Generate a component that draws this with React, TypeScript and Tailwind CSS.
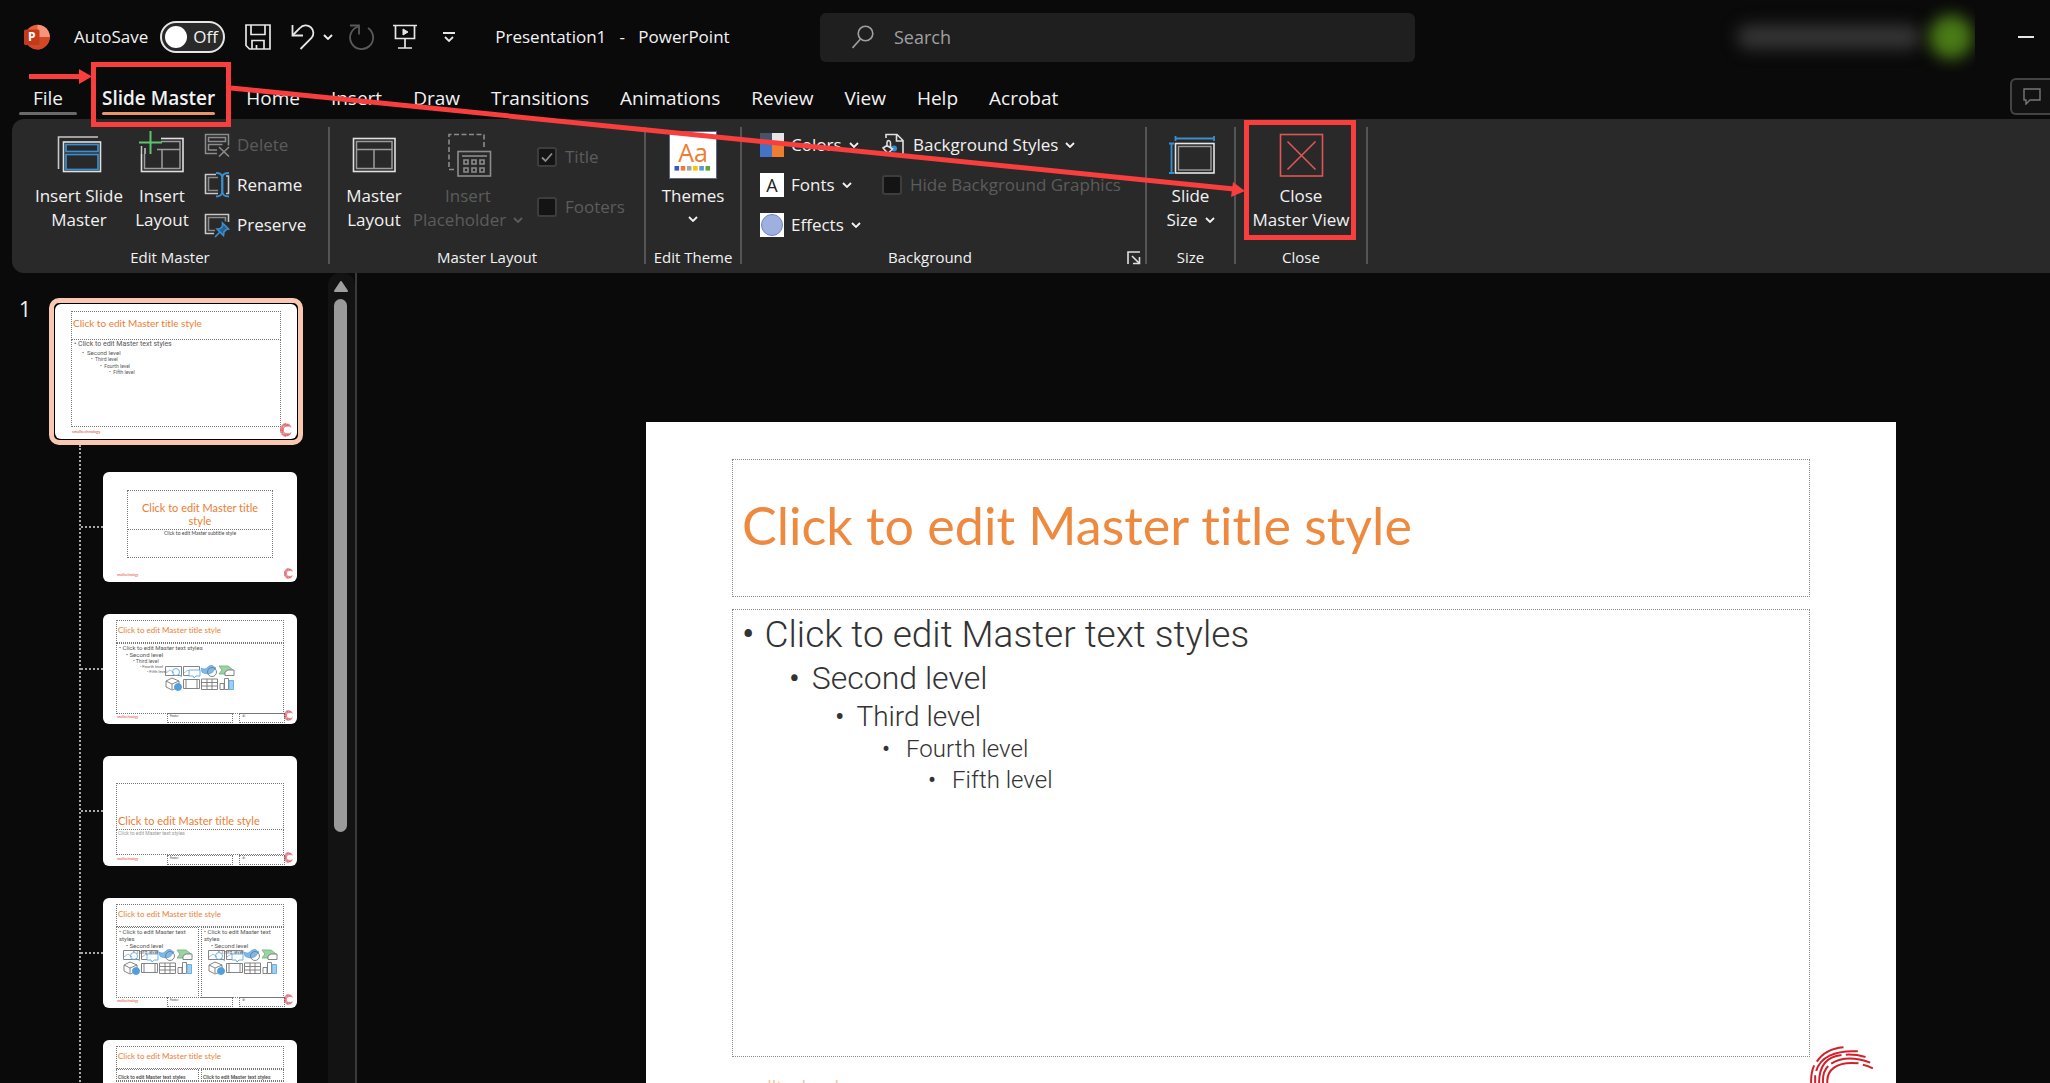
import React from 'react';

const tabs = ['Home', 'Insert', 'Draw', 'Transitions', 'Animations', 'Review', 'View', 'Help', 'Acrobat'];

const levels = [
  { text: 'Click to edit Master text styles', row: 'pl-[9px] gap-[10px] text-[37px] leading-[46px]' },
  { text: 'Second level', row: 'pl-[56px] gap-3 text-[32px] leading-[41px]' },
  { text: 'Third level', row: 'pl-[102px] gap-3 text-[28px] leading-[35px]' },
  { text: 'Fourth level', row: 'pl-[149px] gap-4 text-[24px] leading-[31px]' },
  { text: 'Fifth level', row: 'pl-[195px] gap-4 text-[24px] leading-[31px]' },
];

/* ---------- icons ---------- */

const Chevron = ({ className = '' }: { className?: string }) => (
  <svg viewBox="0 0 10 6" className={`inline-block h-[6px] w-[10px] ${className}`} fill="none" stroke="currentColor" strokeWidth="1.8">
    <path d="M1 1l4 4 4-4" />
  </svg>
);

const PowerPointLogo = () => (
  <svg viewBox="0 0 26 26" className="h-[26px] w-[26px]">
    <circle cx="13.5" cy="13" r="12.3" fill="#e8603c" />
    <path d="M13.5 .7A12.3 12.3 0 0 1 25.8 13H13.5z" fill="#f9937a" />
    <path d="M2.2 18a12.3 12.3 0 0 0 23.6-5H13.5z" fill="#d24726" />
    <rect x="0" y="5.5" width="15.5" height="15.5" rx="1.5" fill="#c13b1b" />
    <text x="7.8" y="17.4" textAnchor="middle" fontSize="12" fontWeight="700" fill="#fff" fontFamily="Open Sans, sans-serif">P</text>
  </svg>
);

const SaveIcon = () => (
  <svg viewBox="0 0 26 26" className="h-[26px] w-[26px]" fill="none" stroke="#e6e6e6" strokeWidth="1.7">
    <path d="M1 1h24v24H4.5L1 21.5z" />
    <path d="M6 1v9.5h14V1M7 25v-8.5h12V25M11.5 21v4" />
  </svg>
);

const UndoIcon = () => (
  <svg viewBox="0 0 24 26" className="h-[26px] w-[24px]" fill="none" stroke="#e6e6e6" strokeWidth="1.8">
    <path d="M1.5 1v10.5H12" />
    <path d="M1.5 11.5L9 4a7.6 7.6 0 0 1 11.5 10L9.500 25" />
  </svg>
);

const RedoIcon = () => (
  <svg viewBox="0 0 26 26" className="h-[26px] w-[26px]" fill="none" stroke="#5a5a5a" strokeWidth="1.8">
    <path d="M1 1.500h9v9" />
    <path d="M9.500 2.500A11.500 11.500 0 1 0 19 4" />
  </svg>
);

const SlideShowIcon = () => (
  <svg viewBox="0 0 24 26" className="h-[26px] w-[24px]" fill="none" stroke="#e6e6e6" strokeWidth="1.7">
    <path d="M0 1.500h24M2.500 1.500v13h19v-13M12 14.500V24M5 24h14" />
    <path d="M10 5l5 3-5 3z" fill="#e6e6e6" strokeWidth="1" />
  </svg>
);

const SlideMasterIcon = () => (
  <svg viewBox="0 0 48 48" className="h-12 w-12" fill="none">
    <path d="M3.500 38V6H43" stroke="#c8c8c8" strokeWidth="1.6" />
    <rect x="8.500" y="11" width="37" height="29.500" stroke="#e0e0e0" strokeWidth="1.600" />
    <rect x="11" y="13.500" width="32" height="7" stroke="#3a8fd0" strokeWidth="1.700" />
    <rect x="11" y="23.500" width="32" height="15" stroke="#3a8fd0" strokeWidth="1.700" />
  </svg>
);

const LayoutIcon = ({ plus = false }: { plus?: boolean }) => (
  <svg viewBox="0 0 48 48" className="h-12 w-12" fill="none">
    <rect x="3.500" y="7.500" width="41.500" height="33" stroke="#e0e0e0" strokeWidth="1.600" />
    <path d="M6.500 10.500h35.500v27h-35.500zM6.500 18.500H42M24 18.500v19" stroke="#9c9c9c" strokeWidth="1.500" />
    {plus && (
      <>
        <path d="M0 0h23v14.500h-4V23H0z" fill="#292929" />
        <path d="M3.500 15v8M7 17v6" stroke="#c8c8c8" strokeWidth="1.500" />
        <path d="M12.500 0v23M1 11.500h23" stroke="#5fc46e" strokeWidth="2" />
      </>
    )}
  </svg>
);

const PlaceholderIcon = () => (
  <svg viewBox="0 0 48 48" className="h-12 w-12" fill="none" stroke="#8c8c8c" strokeWidth="1.600">
    <path d="M10 38.500H5V3.500h35V17" strokeDasharray="5 2.500" />
    <rect x="14" y="20.500" width="32.500" height="24.500" />
    <path d="M18 25h25" />
    <path d="M20 29h4v4h-4zM28 29h4v4h-4zM36 29h4v4h-4zM20 37h4v4h-4zM28 37h4v4h-4zM36 37h4v4h-4z" />
  </svg>
);

const SlideSizeIcon = () => (
  <svg viewBox="0 0 48 48" className="h-12 w-12" fill="none">
    <path d="M8.500 5v5M8.500 7.500h38.500M47 5v5M2 12.500h5M4.500 12.500V42M2 42h5" stroke="#3a8fd0" strokeWidth="1.800" />
    <rect x="8.500" y="12.500" width="38.500" height="29.500" stroke="#e6e6e6" strokeWidth="1.600" />
    <rect x="11.500" y="15.500" width="32.500" height="23.500" stroke="#9c9c9c" strokeWidth="1.400" />
  </svg>
);

const CloseIcon = () => (
  <svg viewBox="0 0 48 48" className="h-12 w-12" fill="none" stroke="#e05555" strokeWidth="1.600">
    <rect x="3.500" y="3.500" width="42" height="41.500" />
    <path d="M10.500 10.500l28 28M38.500 10.500l-28 28" />
  </svg>
);

const ThemesIcon = () => (
  <svg viewBox="0 0 48 48" className="h-12 w-12">
    <rect x=".5" y=".5" width="47" height="47" fill="#fff" stroke="#5d6b8a" />
    <text x="24" y="31" textAnchor="middle" fontSize="25" fill="#ed7d31" fontFamily="Open Sans, sans-serif">Aa</text>
    {['#2f5cc4', '#ed7d31', '#a5a5a5', '#ffc000', '#5b9bd5', '#5fa63a'].map((c, i) => (
      <rect key={c} x={5.500 + i * 6.200} y="35" width="4.600" height="4.600" fill={c} />
    ))}
  </svg>
);

const DeleteIcon = () => (
  <svg viewBox="0 0 26 24" className="h-6 w-[26px]" fill="none" stroke="#8c8c8c" strokeWidth="1.500">
    <path d="M13 20.500H1.500v-19h23v11" />
    <path d="M4.500 4.500h17v4h-17zM13 17H4.500v-5.500h14M15 14l10 9.500M25 14l-10 9.500" />
  </svg>
);

const RenameIcon = () => (
  <svg viewBox="0 0 26 26" className="h-[26px] w-[26px]" fill="none" strokeWidth="1.600">
    <path d="M12 2.500H1.500v19H14M22 4h2.500v17.500H22" stroke="#c8c8c8" />
    <path d="M14 5.500H4.500v13H14" stroke="#8c8c8c" />
    <path d="M12 1c4 0 6 1 6 4v15c0 3-2 4.500-6 4.500M25 1c-4 0-6.500 1-6.500 4v15c0 3 2 4.500 6.500 4.500" stroke="#3a8fd0" strokeWidth="1.800" />
  </svg>
);

const PreserveIcon = () => (
  <svg viewBox="0 0 26 26" className="h-[26px] w-[26px]" fill="none" strokeWidth="1.600">
    <path d="M10 21.500H1.500v-19h23V10" stroke="#c8c8c8" />
    <path d="M11 18.500H4.500v-13h17v4" stroke="#8c8c8c" />
    <path d="M18.500 11l6 6-2 .5-2.500 2.500-.5 3.500-6.500-6.500 3.500-.5 2-2.500zM15.500 20.500L11 25" fill="#2c5f87" stroke="#3a8fd0" />
  </svg>
);

const ColorsIcon = () => (
  <svg viewBox="0 0 24 24" className="h-6 w-6">
    <path d="M0 0h12v12H0z" fill="#44546a" />
    <path d="M12 0h12v12H12z" fill="#e7e6e6" />
    <path d="M0 10h12v14H0z" fill="#4472c4" />
    <path d="M12 10h12v14H12z" fill="#ed7d31" />
  </svg>
);

const FontsIcon = () => (
  <svg viewBox="0 0 24 24" className="h-6 w-6">
    <rect width="24" height="24" fill="#fff" />
    <text x="12" y="18.500" textAnchor="middle" fontSize="18" fill="#222" fontFamily="Open Sans, sans-serif">A</text>
  </svg>
);

const EffectsIcon = () => (
  <svg viewBox="0 0 24 24" className="h-6 w-6">
    <rect width="24" height="24" fill="#fff" />
    <circle cx="12" cy="12" r="10.500" fill="#9db0de" stroke="#6d86c8" />
  </svg>
);

const BackgroundIcon = () => (
  <svg viewBox="0 0 24 24" className="h-6 w-6" fill="none" stroke="#e0e0e0" strokeWidth="1.600">
    <path d="M4 5V1.500h11l6 6V23h-9M14.500 1.500V8H21" />
    <circle cx="12" cy="15.500" r="3" fill="#2f8fe0" stroke="none" />
    <path d="M5 8.500V14M5 8.500c2-2 3.500 0 3.500 1.500v5M1 15l4-2.500 5.500 3.500L6 20.500z" fill="#292929" />
  </svg>
);

/* Brand mark: five broken arcs forming a C */
const arcs = (
  <g>
    <path d="M331 249C330 228 332 208 340 191M348 180C364 156 390 140 428 137" />
    <path d="M343 249V221M346 208C358 168 400 145 471 149" />
    <path d="M355 249C353 196 376 165 422 160M435 159C456 158 476 161 494 166" />
    <path d="M367 249C364 222 371 204 382 193M391 186C420 168 462 166 508 183" />
    <path d="M380 249C374 205 407 178 473 185M486 189C497 191 507 195 516 200" />
  </g>
);

const BrandMark = ({ className = '' }: { className?: string }) => (
  <svg viewBox="325 130 200 240" className={className} fill="none" stroke="#d0202a" strokeWidth="6">
    {arcs}
    <g transform="matrix(1 0 0 -1 0 498)">{arcs}</g>
  </svg>
);

/* The eight "insert content" glyphs in a content placeholder */
const ContentIcons = ({ className = '' }: { className?: string }) => (
  <svg viewBox="0 0 70 26" className={`absolute h-[26px] w-[70px] ${className}`} fill="none" stroke="#777" strokeWidth=".9">
    <path d="M.5 1.500h16v9H.5zM18.500 1.500h16v9h-16z" />
    <path d="M1 8l4-3 4 3M19 8l4-3 4 3" stroke="#8ab8de" />
    <circle cx="11" cy="7" r="3.500" stroke="#5ea9e2" />
    <path d="M13.500 9.500L17 12" stroke="#5ea9e2" />
    <path d="M24 5h11v6h-4l-2 2-1-2h-4z" stroke="#5ea9e2" fill="#fff" />
    <path d="M36 3c3 2 5 1 7-1s5-2 6 0l2 1-2 2c-1 4-8 5-12 2z" fill="#7fb9e8" stroke="#5ea9e2" />
    <circle cx="47" cy="7" r="4.500" />
    <path d="M54 1h9l5 4-5 4h-9l3-4z" fill="#9bd3a3" stroke="#6fb97b" />
    <path d="M60 10.500V7l3-2h6v5.500z" fill="#fff" />
    <path d="M1 16l6-3 7 3v6l-7 3-6-3zM1 16l6 3 7-3M7 19v5" />
    <circle cx="13" cy="22" r="3.500" fill="#4f9fe0" stroke="#4f9fe0" />
    <path d="M18.500 14.500h16v9h-16zM21 14.500v9M32 14.500v9" />
    <path d="M36.500 14h16v10.500h-16zM36.500 17.500h16M36.500 21h16M42 14v10.500M47 14v10.500" />
    <path d="M55 18.500h4v6h-4zM59.500 13.500h4v11h-4z" />
    <path d="M64 15.500h4.500v9H64z" fill="#9fd0f2" stroke="#5ea9e2" />
  </svg>
);

/* ---------- ribbon parts ---------- */

const Separator = () => <div className="mt-[2px] mb-[9px] w-[2px] self-stretch bg-[#555]" />;

const Group = ({ label, width, launcher, children }: { label: string; width: string; launcher?: boolean; children: React.ReactNode }) => (
  <section className={`flex flex-col justify-between pb-2 ${width}`}>
    <div className="flex items-start">{children}</div>
    <div className="flex items-center text-[15px] leading-[15px]">
      <span className="flex-1 text-center">{label}</span>
      {launcher && (
        <button aria-label="Format Background" className="w-[27px] pl-[9px]">
          <svg viewBox="0 0 14 14" className="h-[14px] w-[14px]" fill="none" stroke="#e0e0e0" strokeWidth="1.600">
            <path d="M1 13V1h12M5 5l7 7M12.500 6v6.500H6" />
          </svg>
        </button>
      )}
    </div>
  </section>
);

const BigButton = ({ icon, lines, width, arrow, disabled }: { icon: React.ReactNode; lines: string[]; width: string; arrow?: boolean; disabled?: boolean }) => (
  <button disabled={disabled} className={`flex flex-col items-center pt-[6px] disabled:text-[#5c5c5c] ${width}`}>
    {icon}
    <span className="mt-[5px] flex flex-col items-center whitespace-nowrap text-[17px] leading-6">
      {lines.map((line, i) => (
        <span key={line} className="h-6">
          {line}
          {arrow && i === lines.length - 1 && lines.length > 1 && <Chevron className="mb-[3px] ml-[7px]" />}
        </span>
      ))}
      {arrow && lines.length === 1 && <Chevron className="mt-2" />}
    </span>
  </button>
);

const SmallButton = ({ icon, label, arrow, disabled }: { icon: React.ReactNode; label: string; arrow?: boolean; disabled?: boolean }) => (
  <button disabled={disabled} className="flex h-10 items-center gap-[7px] whitespace-nowrap text-[17px] disabled:text-[#5c5c5c]">
    {icon}
    {label}
    {arrow && <Chevron />}
  </button>
);

const CheckRow = ({ id, label, checked, height }: { id: string; label: string; checked?: boolean; height: string }) => (
  <div className={`flex items-center gap-2 text-[17px] text-[#5c5c5c] ${height}`}>
    <span className="relative flex">
      <input id={id} type="checkbox" disabled defaultChecked={checked} className="h-5 w-5 appearance-none rounded-[3px] border-2 border-[#3d3d3d] bg-[#141414]" />
      {checked && (
        <svg viewBox="0 0 20 20" className="pointer-events-none absolute inset-0 h-5 w-5" fill="none" stroke="#8c8c8c" strokeWidth="1.800">
          <path d="M5 10.500l3.500 3.500L15 6.500" />
        </svg>
      )}
    </span>
    <label htmlFor={id} className="whitespace-nowrap">{label}</label>
  </div>
);

const Ribbon = () => (
  <div className="ml-3 flex h-[154px] rounded-l-xl bg-[#292929] pt-[6px]">
    <Group label="Edit Master" width="w-[316px] [&>div:first-child]:pl-[17px]">
      <BigButton icon={<SlideMasterIcon />} lines={['Insert Slide', 'Master']} width="w-[100px]" />
      <BigButton icon={<LayoutIcon plus />} lines={['Insert', 'Layout']} width="w-[66px]" />
      <div className="ml-[9px]">
        <SmallButton icon={<DeleteIcon />} label="Delete" disabled />
        <SmallButton icon={<RenameIcon />} label="Rename" />
        <SmallButton icon={<PreserveIcon />} label="Preserve" />
      </div>
    </Group>
    <Separator />
    <Group label="Master Layout" width="w-[314px] [&>div:first-child]:pl-[9px]">
      <BigButton icon={<LayoutIcon />} lines={['Master', 'Layout']} width="w-[70px]" />
      <BigButton icon={<PlaceholderIcon />} lines={['Insert', 'Placeholder']} width="w-[118px]" arrow disabled />
      <div className="ml-[10px] pt-[7px]">
        <CheckRow id="title" label="Title" checked height="h-[50px]" />
        <CheckRow id="footers" label="Footers" height="h-[50px]" />
      </div>
    </Group>
    <Separator />
    <Group label="Edit Theme" width="w-[94px]">
      <BigButton icon={<ThemesIcon />} lines={['Themes']} width="w-full" arrow />
    </Group>
    <Separator />
    <Group label="Background" width="w-[403px] [&>div:first-child]:pl-[18px]" launcher>
      <div className="w-[122px]">
        <SmallButton icon={<ColorsIcon />} label="Colors" arrow />
        <SmallButton icon={<FontsIcon />} label="Fonts" arrow />
        <SmallButton icon={<EffectsIcon />} label="Effects" arrow />
      </div>
      <div>
        <SmallButton icon={<BackgroundIcon />} label="Background Styles" arrow />
        <CheckRow id="hide" label="Hide Background Graphics" height="h-10" />
      </div>
    </Group>
    <Separator />
    <Group label="Size" width="w-[87px]">
      <BigButton icon={<SlideSizeIcon />} lines={['Slide', 'Size']} width="w-full" arrow />
    </Group>
    <Separator />
    <Group label="Close" width="w-[130px]">
      <BigButton icon={<CloseIcon />} lines={['Close', 'Master View']} width="w-full" />
    </Group>
    <Separator />
  </div>
);

const TitleBar = () => (
  <header className="flex h-[74px] items-center text-[17px]">
    <div className="flex w-[40%] items-center pl-6">
      <PowerPointLogo />
      <span id="autosave" className="ml-6">AutoSave</span>
      <button role="switch" aria-checked="false" aria-labelledby="autosave" className="ml-3 flex h-8 w-[65px] items-center gap-[6px] rounded-full border-2 border-[#e6e6e6] bg-[#292929] pl-[3px]">
        <span className="h-[22px] w-[22px] rounded-full bg-white" />
        Off
      </button>
      <button aria-label="Save" className="ml-5"><SaveIcon /></button>
      <button aria-label="Undo" className="ml-5"><UndoIcon /></button>
      <button aria-label="Undo history" className="ml-2 flex"><Chevron /></button>
      <button aria-label="Redo" className="ml-4"><RedoIcon /></button>
      <button aria-label="Start slide show" className="ml-[18px]"><SlideShowIcon /></button>
      <button aria-label="Customize toolbar" className="ml-[26px]">
        <svg viewBox="0 0 12 12" className="h-3 w-3" fill="none" stroke="#e6e6e6" strokeWidth="1.800">
          <path d="M0 2h12M2 6l4 4 4-4" />
        </svg>
      </button>
      <h1 className="ml-10 whitespace-pre">Presentation1   -   PowerPoint</h1>
    </div>
    <label className="flex h-[49px] w-[29%] items-center gap-5 rounded-md bg-[#1f1f1f] pl-8">
      <svg viewBox="0 0 22 24" className="h-6 w-[22px]" fill="none" stroke="#a0a0a0" strokeWidth="1.600">
        <circle cx="13.500" cy="8.500" r="7.300" />
        <path d="M8.500 14L.5 23" />
      </svg>
      <input type="text" aria-label="Search" placeholder="Search" className="flex-1 bg-transparent text-[18px] outline-none placeholder:text-[#a0a0a0]" />
    </label>
    <div className="flex flex-1 items-center justify-end pr-4">
      <div className="flex h-[74px] items-center overflow-hidden pl-5">
        <div className="h-6 w-[184px] rounded-full bg-[#353535] blur-[8px]" />
        <div className="mr-[2px] ml-2 h-11 w-11 rounded-full bg-[#4a7a16] blur-[8px]" />
      </div>
      <button aria-label="Minimize" className="ml-[43px] h-[2px] w-4 bg-[#e6e6e6]" />
    </div>
  </header>
);

const TabRow = () => (
  <nav className="flex h-[45px] items-start justify-between text-[19px]">
    <div className="flex gap-[31px] pt-[10px] pl-[19px] leading-7">
      <button className="-mr-[6px] flex flex-col items-center">
        File
        <span className="h-[3px] w-[58px] rounded-full bg-[#6a6a6a]" />
      </button>
      <button className="flex flex-col font-semibold">
        Slide Master
        <span className="h-[3px] w-full rounded-full bg-[#e8956b]" />
      </button>
      {tabs.map((tab) => (
        <button key={tab} className="h-7">{tab}</button>
      ))}
    </div>
    <button aria-label="Comments" className="mt-1 flex h-[37px] w-10 items-center rounded-l-md border-2 border-r-0 border-[#444] bg-[#121212] pl-[11px]">
      <svg viewBox="0 0 18 17" className="h-[17px] w-[18px]" fill="none" stroke="#777" strokeWidth="1.400">
        <path d="M1 1h16v11H7l-4 4v-4H1z" />
      </svg>
    </button>
  </nav>
);

/* ---------- thumbnails ---------- */

const Box = ({ className = '', children }: { className?: string; children?: React.ReactNode }) => (
  <div className={`border border-dotted border-[#777] ${className}`}>{children}</div>
);

const ThumbBody = ({ items }: { items: string[] }) => (
  <ul className="font-[Roboto,sans-serif] text-[#555]">
    {items.map((t, i) => (
      <li key={t} className={['pl-[2px] text-[6px] leading-[7px]', 'pl-[9px] text-[6px] leading-[7px]', 'pl-4 text-[5px] leading-[6px]', 'pl-[23px] text-[4px] leading-[5px]', 'pl-[30px] text-[4px] leading-[5px]'][i]}>
        • {t}
      </li>
    ))}
  </ul>
);

const ThumbFooter = ({ fields = true }: { fields?: boolean }) => (
  <>
    <span className="absolute bottom-[5px] left-[14px] text-[3px] leading-[4px] text-[#e0452f]">smalltechnology</span>
    {fields && (
      <>
        <Box className="absolute bottom-[1px] left-16 h-[10px] w-[66px] pl-[2px] text-[3px] leading-[5px]">Footer</Box>
        <Box className="absolute bottom-[1px] left-[136px] h-[10px] w-[46px] pl-[2px] text-[3px] leading-[5px]">‹#›</Box>
      </>
    )}
    <BrandMark className="absolute right-1 bottom-[3px] h-[11px] w-[9px] [stroke-width:10]" />
  </>
);

const ThumbTitle = () => <Box className="flex h-[23px] items-center pb-[3px] pl-[1px] text-[8px] text-[#ed7d31]">Click to edit Master title style</Box>;

const LayoutThumb = ({ label, className = '', children }: { label: string; className?: string; children: React.ReactNode }) => (
  <li className="flex items-center">
    <span className="w-[22px] shrink-0 border-t-2 border-dotted border-[#aaa]" />
    <button aria-label={label} className={`relative flex h-[110px] w-[194px] flex-col items-stretch overflow-hidden rounded-md bg-white text-left font-[Lato,sans-serif] text-[#444] ${className}`}>
      {children}
    </button>
  </li>
);

const SlidePane = () => (
  <aside className="flex shrink-0 overflow-hidden border-r-2 border-[#3a3a3a] [font-variant-ligatures:none]">
    <div className="w-[328px] pt-[25px]">
      <div className="flex">
        <span className="w-[49px] pl-[19px] text-[21px] leading-[22px]">1</span>
        <button aria-label="Slide master" className="h-[147px] w-[254px] rounded-[10px] border-[5px] border-[#f8c9b0] bg-black p-[1px] text-left font-[Lato,sans-serif]">
          <div className="relative h-full rounded-md bg-white px-4 pt-[7px]">
            <Box className="flex h-[29px] items-center pb-1 pl-[1px] text-[10px] text-[#ed7d31]">Click to edit Master title style</Box>
            <Box className="-mt-[1px] h-[88px]">
              <ul className="font-[Roboto,sans-serif] text-[#555]">
                <li className="pl-[2px] text-[7px] leading-[9px]">• Click to edit Master text styles</li>
                <li className="pl-[10px] text-[6px] leading-[7px]">•&nbsp; Second level</li>
                <li className="pl-[19px] text-[5px] leading-[7px]">•&nbsp; Third level</li>
                <li className="pl-7 text-[5px] leading-[6px]">•&nbsp; Fourth level</li>
                <li className="pl-[37px] text-[5px] leading-[6px]">•&nbsp; Fifth level</li>
              </ul>
            </Box>
            <span className="absolute bottom-[5px] left-[17px] text-[4px] leading-[5px] text-[#e0452f]">smalltechnology</span>
            <BrandMark className="absolute right-[5px] bottom-[2px] h-[14px] w-3 [stroke-width:10]" />
          </div>
        </button>
      </div>
      <ul className="ml-[79px] flex flex-col gap-8 border-l-2 border-dotted border-[#aaa] pt-[27px]">
        <LayoutThumb label="Title slide layout" className="px-6 pt-[18px]">
          <Box className="h-10 px-3 pt-[10px] text-center text-[11px] leading-[13px] text-[#ed7d31]">Click to edit Master title style</Box>
          <Box className="-mt-[1px] h-[29px] text-center text-[5px] leading-[7px]">Click to edit Master subtitle style</Box>
          <ThumbFooter fields={false} />
        </LayoutThumb>
        <LayoutThumb label="Title and content layout" className="px-[13px] pt-[6px]">
          <ThumbTitle />
          <Box className="relative h-[71px]">
            <ThumbBody items={['Click to edit Master text styles', 'Second level', 'Third level', 'Fourth level', 'Fifth level']} />
            <ContentIcons className="top-[21px] left-12" />
          </Box>
          <ThumbFooter />
        </LayoutThumb>
        <LayoutThumb label="Section header layout" className="px-[13px] pt-[27px]">
          <Box className="flex h-[47px] items-end pb-[2px] pl-[1px] text-[11px] leading-[13px] text-[#ed7d31]">Click to edit Master title style</Box>
          <Box className="-mt-[1px] h-[26px] pl-[1px] font-[Roboto,sans-serif] text-[5px] leading-[7px] text-[#999]">Click to edit Master text styles</Box>
          <ThumbFooter />
        </LayoutThumb>
        <LayoutThumb label="Two content layout" className="px-[13px] pt-[6px]">
          <ThumbTitle />
          <div className="flex gap-[2px]">
            {['left', 'right'].map((side) => (
              <Box key={side} className="relative h-[71px] flex-1">
                <ThumbBody items={['Click to edit Master text styles', 'Second level', 'Third level']} />
                <ContentIcons className="top-[21px] left-[6px]" />
              </Box>
            ))}
          </div>
          <ThumbFooter />
        </LayoutThumb>
        <LayoutThumb label="Comparison layout" className="px-[13px] pt-[6px]">
          <ThumbTitle />
          <div className="flex gap-[2px]">
            {['left', 'right'].map((side) => (
              <div key={side} className="flex-1 font-[Roboto,sans-serif] text-[5px] leading-[5px] font-medium">
                <Box className="h-3 pt-[5px] pl-[1px]">Click to edit Master text styles</Box>
                <Box className="h-[59px]" />
              </div>
            ))}
          </div>
        </LayoutThumb>
      </ul>
    </div>
    <div className="flex w-[27px] flex-col items-start rounded-t-xl bg-[#131313] pt-2 pl-[6px]">
      <svg viewBox="0 0 14 11" className="h-[11px] w-[14px]"><path d="M7 1l6 9H1z" fill="#a0a0a0" stroke="#a0a0a0" strokeLinejoin="round" strokeWidth="2" /></svg>
      <div className="mt-[7px] h-[533px] w-[13px] rounded-full bg-[#9a9a9a]" />
    </div>
  </aside>
);

const SlideCanvas = () => (
  <main className="min-w-0 flex-1 overflow-hidden pt-[149px] pr-[154px] pl-[289px] [font-variant-ligatures:none]">
    <div className="relative aspect-video bg-white px-[86px] pt-[37px]">
      <div className="flex h-[138px] items-center border border-dotted border-[#8a8a8a] pb-[6px] pl-[9px]">
        <h2 className="font-[Lato,sans-serif] text-[52px] whitespace-nowrap text-[#ed8a3f]">Click to edit Master title style</h2>
      </div>
      <div className="mt-3 h-[448px] border border-dotted border-[#8a8a8a] pt-[2px]">
        <ul className="font-[Roboto,sans-serif] font-light text-[#333]">
          {levels.map((l) => (
            <li key={l.text} className={`flex ${l.row}`}>
              <span className="font-normal">•</span>
              {l.text}
            </li>
          ))}
        </ul>
      </div>
      <p className="mt-[18px] text-[18px] leading-6 text-[#f6c4a0]">smalltechnology</p>
      <BrandMark className="absolute right-5 bottom-0 h-20 w-[67px]" />
    </div>
  </main>
);

/* Red call-outs pointing from the tab to the close button */
const Callouts = () => (
  <svg className="pointer-events-none absolute top-0 left-0 h-[260px] w-[1400px]" viewBox="0 0 1400 260" fill="none" stroke="#f93e3e" strokeWidth="5">
    <rect x="93.500" y="64.500" width="135" height="60" />
    <rect x="1246.500" y="122.500" width="107" height="115" />
    <path d="M29 76.500h52M231 88l1003 101" />
    <path d="M79 69v15l13-7.500zM1233 182l-2 15 14-6z" fill="#f93e3e" stroke="none" />
  </svg>
);

const App: React.FC = () => {
  return (
    <div className="relative flex h-screen flex-col overflow-hidden bg-[#0a0a0a] font-['Open_Sans',sans-serif] text-[#f2f2f2]">
      <TitleBar />
      <TabRow />
      <Ribbon />
      <div className="flex min-h-0 flex-1">
        <SlidePane />
        <SlideCanvas />
      </div>
      <Callouts />
    </div>
  );
};

export default App;
